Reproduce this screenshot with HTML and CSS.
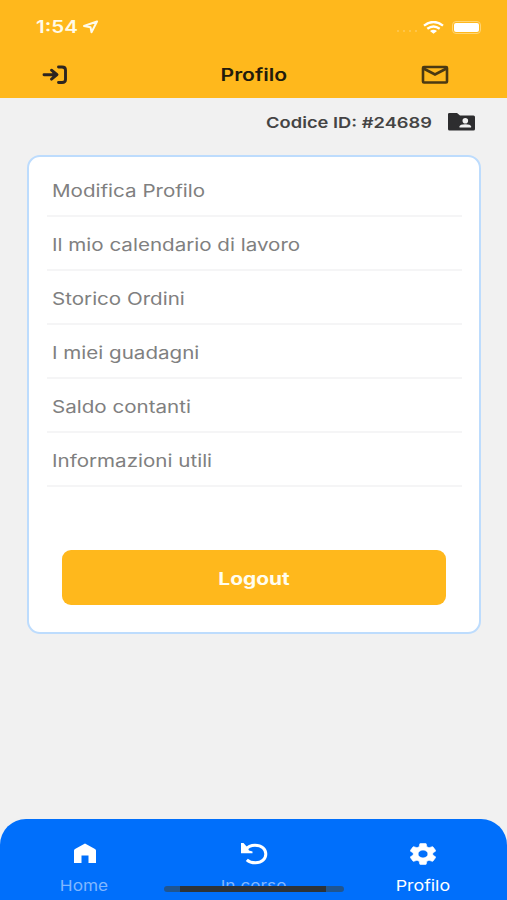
FILE: index.html
```html
<!DOCTYPE html>
<html lang="it">
<head>
<meta charset="utf-8">
<title>Profilo</title>
<link rel="stylesheet" href="styles.css">
</head>
<body>
<div class="app">
  <header class="top">
    <div class="status">
      <span class="time wide">1:54</span>
      <svg class="nav-arrow" width="17" height="14" viewBox="0 0 17 14"><path d="M15 1.500 2 6l6.500 1.300L9.500 12.200z"/></svg>
      <span class="dots"><i></i><i></i><i></i><i></i></span>
      <svg class="wifi" width="21" height="13" viewBox="0 0 21 13"><path d="M1 4.600Q10.500-2.600 20 4.600M4.300 7.800q6.200-4.500 12.400 0"/><path class="solid" d="M7 10q3.500-2.300 7 0L10.500 12.800z"/></svg>
      <span class="battery"><i></i></span>
    </div>
    <div class="titlebar">
      <svg class="exit" width="26" height="20" viewBox="0 0 26 20"><path d="M2 9.700H14M9.500 5.200l5.500 4.500-5.500 4.500M16.500 2H20q3.500 0 3.500 3v9.500q0 3-3.500 3h-3.500"/><path class="head" d="M10.500 6 15 9.700 10.500 13.400z"/></svg>
      <h1 class="wide">Profilo</h1>
      <svg class="mail" width="28" height="20" viewBox="0 0 28 20"><rect x="2" y="2" width="24" height="15.500" rx="1"/><path d="M2.500 3.500 14 9.500 25.500 3.500"/></svg>
    </div>
  </header>
  <div class="idrow">
    <span class="wide code">Codice ID: #24689</span>
    <svg width="27" height="18" viewBox="0 0 27 18"><path fill="#2d2d2f" d="M0 1Q0 0 1.500 0H9l3 2.500H25.500Q27 2.500 27 4V16Q27 17.500 25.500 17.500H1.500Q0 17.500 0 16z"/><circle cx="17.300" cy="7.700" r="2.800" fill="#f1f1f1"/><path fill="#f1f1f1" d="M11.500 14.500V13.500Q12 11.300 17.300 11.300T23.100 13.500V14.500z"/></svg>
  </div>
  <main class="card">
    <ul>
      <li><span class="wide">Modifica Profilo</span></li>
      <li><span class="wide">Il mio calendario di lavoro</span></li>
      <li><span class="wide">Storico Ordini</span></li>
      <li><span class="wide">I miei guadagni</span></li>
      <li><span class="wide">Saldo contanti</span></li>
      <li><span class="wide">Informazioni utili</span></li>
    </ul>
    <button><span class="wide">Logout</span></button>
  </main>
  <nav class="tabs">
    <a class="tab"><svg width="22" height="22" viewBox="0 0 22 22"><path fill="#fff" d="M0 7.500Q0 6.500 1 6L11 .500 21 6Q22 6.500 22 7.500V20H14.500V12.500H7.500V20H0z"/></svg><span class="wide">Home</span></a>
    <a class="tab"><svg width="28" height="22" viewBox="0 0 28 22"><path fill="none" stroke="#fff" stroke-width="3" d="M5 7Q9 2.200 15 2.200C22 2.200 25.800 6.300 25.800 11S22 19.800 15.500 19.800Q10 19.800 6.800 16.800"/><path fill="#fff" d="M1 0H3.500L7.500 4.500 9 7.500 12.500 8.500V10.200H1z"/></svg><span class="wide">In corso</span></a>
    <a class="tab active"><svg width="26" height="22" viewBox="2.500 2 19 20" preserveAspectRatio="none"><path fill="#fff" stroke="#fff" stroke-width=".5" d="M19.140 12.940c.040-.300.060-.610.060-.940 0-.320-.020-.640-.070-.940l2.030-1.580c.180-.140.230-.410.120-.610l-1.920-3.320c-.120-.220-.370-.290-.590-.220l-2.390.960c-.500-.380-1.030-.700-1.620-.940l-.360-2.540c-.040-.240-.240-.410-.480-.410h-3.840c-.240 0-.430.170-.470.410l-.360 2.540c-.590.240-1.130.570-1.620.940l-2.390-.960c-.220-.080-.470 0-.590.220L2.740 8.870c-.120.210-.080.470.120.610l2.030 1.580c-.050.300-.090.630-.090.940s.020.640.070.940l-2.030 1.580c-.180.140-.230.410-.120.610l1.920 3.320c.120.220.370.290.590.220l2.390-.960c.500.380 1.030.700 1.620.940l.360 2.540c.050.240.240.410.480.410h3.840c.240 0 .440-.170.470-.410l.360-2.540c.590-.240 1.130-.560 1.620-.940l2.390.960c.220.080.470 0 .590-.220l1.920-3.320c.120-.220.070-.470-.120-.610zM12 15.600a3.600 3.600 0 1 1 0-7.200 3.600 3.600 0 0 1 0 7.200z"/></svg><span class="wide">Profilo</span></a>
    <div class="indicator"></div>
  </nav>
</div>
</body>
</html>
```
FILE: styles.css
```css
* { box-sizing: border-box; }
body { margin: 0; font-family: Inter, "Liberation Sans", sans-serif; background: #f1f1f1; }
.app { height: 900px; display: flex; flex-direction: column; overflow: hidden; }
.wide { display: inline-block; transform: scaleX(1.21); white-space: nowrap; }
.top { height: 98px; background: #ffb81c; }
.status { height: 54px; padding: 0 24px 0 36px; display: flex; align-items: center; }
.time { color: #fffbea; font-size: 17px; font-weight: 600; transform-origin: left; width: 46px; }
.nav-arrow { fill: none; stroke: #fffbea; stroke-width: 2; stroke-linejoin: round; }
.dots { margin-left: auto; display: flex; gap: 4px; padding-top: 8px; margin-right: 6px; }
.dots i { width: 2px; height: 2px; border-radius: 50%; background: #ffca57; }
.wifi { fill: none; stroke: #fff; stroke-width: 2.4; margin-right: 8px; }
.wifi .solid { fill: #fff; stroke: none; }
.battery { width: 29px; height: 13px; border: 1px solid #ffd574; border-radius: 4px; padding: 1px; margin-right: 2px; }
.battery i { display: block; height: 9px; border-radius: 2px; background: #fff; }
.titlebar { height: 42px; padding: 0 58px 0 42px; display: grid; grid-template-columns: 1fr auto 1fr; align-items: center; }
.exit { fill: none; stroke: #2d2520; stroke-width: 2.9; stroke-linecap: round; stroke-linejoin: round; }
.exit .head { fill: #2d2520; stroke: none; }
.mail { fill: none; stroke: #4b3912; stroke-width: 2.6; justify-self: end; }
h1 { margin: 0; font-size: 17px; font-weight: 600; color: #231b0b; line-height: 42px; position: relative; left: 8px; }
h1.wide { transform: scaleX(1.24); }
.idrow { height: 48px; padding-right: 32px; display: flex; justify-content: flex-end; align-items: center; gap: 16px; }
.code { font-size: 15px; font-weight: 600; color: #444; transform: scaleX(1.22); transform-origin: right; }
.card { margin: 9px 26px 0 27px; height: 479px; background: #fff; border: 2px solid #bddcfd; border-radius: 13px; }
ul { list-style: none; margin: 6px 17px 0 18px; padding: 0; }
li { height: 54px; border-bottom: 2px solid #f5f5f6; padding: 4px 0 0 5px; display: flex; align-items: center; font-size: 17px; color: #808080; }
li .wide { transform-origin: left; }
button { display: block; width: 384px; height: 55px; margin: 63px 0 0 33px; border: 0; border-radius: 9px; background: #ffb81c; color: #fffdf0; font: 700 17px Inter, sans-serif; padding: 2px 0 0; }
button .wide { transform: scaleX(1.23); }
.tabs { margin-top: auto; height: 81px; background: #006ffb; border-radius: 26px 26px 0 0; display: grid; grid-template-columns: repeat(3, 1fr); position: relative; }
.tab { display: flex; flex-direction: column; align-items: center; color: #80b7ff; font-size: 15px; }
.tab svg { margin-top: 24px; height: 22px; }
.tab .wide { margin-top: 12px; line-height: 18px; transform: scaleX(1.15); }
.tab.active { color: #fff; }
.tab.active .wide { transform: scaleX(1.19); }
.indicator { position: absolute; left: 164px; bottom: 8px; width: 180px; height: 6px; border-radius: 3px; background: linear-gradient(90deg, #20558f 0 9%, #2d3338 9% 90%, #20558f 90%); }
```
